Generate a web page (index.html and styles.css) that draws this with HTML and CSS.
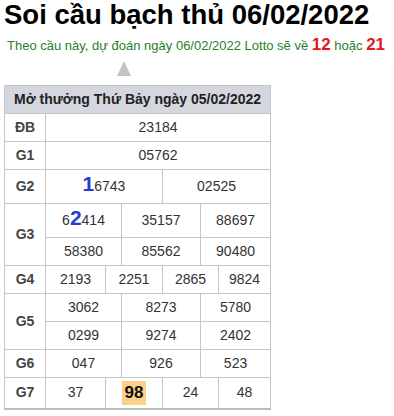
FILE: index.html
```html
<!DOCTYPE html>
<html>
<head>
<meta charset="utf-8">
<link rel="stylesheet" href="styles.css">
</head>
<body>
<h1 class="title">Soi cầu bạch thủ 06/02/2022</h1>
<div class="sub">Theo cầu này, dự đoán ngày 06/02/2022 Lotto sẽ về <b class="hot">12</b> hoặc <b class="hot">21</b></div>
<div class="arrow-row"><span class="arrow"></span></div>
<table class="kq">
  <colgroup>
    <col class="c0"><col class="c1"><col class="c2"><col class="c3"><col class="c4"><col class="c5"><col class="c6">
  </colgroup>
  <tr><th colspan="7" class="head">Mở thưởng Thứ Bảy ngày 05/02/2022</th></tr>
  <tr><td class="lbl">ĐB</td><td colspan="6">23184</td></tr>
  <tr><td class="lbl">G1</td><td colspan="6">05762</td></tr>
  <tr class="big-row"><td class="lbl">G2</td><td colspan="3"><span class="pick">1</span>6743</td><td colspan="3">02525</td></tr>
  <tr class="big-row"><td class="lbl" rowspan="2">G3</td><td colspan="2">6<span class="pick">2</span>414</td><td colspan="2">35157</td><td colspan="2">88697</td></tr>
  <tr><td colspan="2">58380</td><td colspan="2">85562</td><td colspan="2">90480</td></tr>
  <tr><td class="lbl">G4</td><td>2193</td><td colspan="2">2251</td><td colspan="2">2865</td><td>9824</td></tr>
  <tr><td class="lbl" rowspan="2">G5</td><td colspan="2">3062</td><td colspan="2">8273</td><td colspan="2">5780</td></tr>
  <tr><td colspan="2">0299</td><td colspan="2">9274</td><td colspan="2">2402</td></tr>
  <tr><td class="lbl">G6</td><td colspan="2">047</td><td colspan="2">926</td><td colspan="2">523</td></tr>
  <tr class="last"><td class="lbl">G7</td><td>37</td><td colspan="2"><span class="mark">98</span></td><td colspan="2">24</td><td>48</td></tr>
</table>
</body>
</html>
```
FILE: styles.css
```css
html, body {
  margin: 0;
  padding: 0;
  background: #fff;
}
body {
  padding: 0 4px;
  font-family: "Liberation Sans", Arial, sans-serif;
  color: #333;
}
.title {
  margin: 0;
  font-size: 27.5px;
  line-height: 30px;
  font-weight: bold;
  color: #000;
}
.sub {
  margin-top: 5px;
  padding-left: 3px;
  font-size: 13px;
  line-height: 20px;
  color: #2a7d2a;
  white-space: nowrap;
}
.hot {
  font-size: 17px;
  color: #e3171b;
}
.arrow-row {
  height: 29px;
  padding-top: 5px;
  box-sizing: border-box;
}
.arrow {
  display: block;
  width: 0;
  height: 0;
  margin-left: 113px;
  border-left: 7.5px solid transparent;
  border-right: 7.5px solid transparent;
  border-bottom: 15px solid #c4c4c4;
}
.kq {
  table-layout: fixed;
  width: 266px;
  border-collapse: collapse;
  border: 1px solid #c6c6c6;
  border-bottom: 2px solid #bdbdbd;
  font-size: 14px;
}
.c0 { width: 41px; }
.c1 { width: 60px; }
.c2 { width: 16px; }
.c3 { width: 41px; }
.c4 { width: 38px; }
.c5 { width: 18px; }
.c6 { width: 52px; }
.kq th, .kq td {
  border: 1px solid #c6c6c6;
  text-align: center;
  padding: 5px 0;
  line-height: 17px;
  white-space: nowrap;
}
.head {
  background: #d5d7de;
  color: #222;
  font-weight: bold;
  font-size: 14px;
}
.lbl {
  font-weight: bold;
  color: #444;
}
.big-row td {
  line-height: 23px;
}
.pick {
  font-size: 21px;
  font-weight: bold;
  color: #1f3fd0;
  line-height: 17px;
}
.mark {
  display: inline-block;
  background: #fbd187;
  color: #111;
  font-weight: bold;
  font-size: 17px;
  line-height: 18px;
  padding: 3px 3px;
}
.last td {
  padding: 1px 0 2px;
}
.last td.lbl {
  line-height: 27px;
}
```
